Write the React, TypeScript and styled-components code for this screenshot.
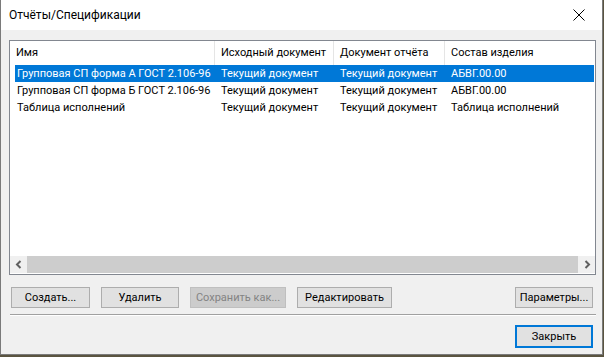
import styled, { createGlobalStyle } from 'styled-components';

const font = '"Roboto", "Noto Sans", "Liberation Sans", sans-serif'

const GlobalStyle = createGlobalStyle`
  html, body {
    margin: 0;
    padding: 0;
    background: #5a5440;
  }
  body {
    font-family: ${font};
    font-size: 11px;
    color: #000;
  }
`

const Window = styled.div`
  width: 603px;
  height: 355px;
  box-sizing: border-box;
  border: 1px solid #7a7a7a;
  border-top: none;
  background: #f0f0f0;
  display: flex;
  flex-direction: column;
`

const TitleBar = styled.div`
  height: 30px;
  flex: none;
  background: #fff;
  display: flex;
  align-items: center;
  justify-content: space-between;
  padding-left: 8px;
`

const Title = styled.span`
  font-size: 12px;
  line-height: 30px;
`

const CloseBox = styled.div`
  width: 46px;
  height: 30px;
  display: flex;
  align-items: center;
  justify-content: center;
`

const Body = styled.div`
  flex: 1;
  display: flex;
  flex-direction: column;
  padding: 10px 6px 0 8px;
`

const ListBox = styled.div`
  height: 235px;
  box-sizing: border-box;
  border: 1px solid #828790;
  background: #fff;
  display: flex;
  flex-direction: column;
`

const Header = styled.div`
  height: 24px;
  flex: none;
  display: grid;
  grid-template-columns: 205px 119px 111px 1fr;
`

const HeaderCell = styled.div<{ $last?: boolean }>`
  border-right: ${p => (p.$last ? 'none' : '1px solid #e5e5e5')};
  padding-left: 6px;
  line-height: 24px;
  white-space: nowrap;
  overflow: hidden;
`

const Rows = styled.div`
  flex: 1;
  padding: 0 1px 0 5px;
`

const Row = styled.div<{ $selected?: boolean }>`
  height: 17px;
  display: grid;
  grid-template-columns: 200px 119px 111px 1fr;
  background: ${p => (p.$selected ? '#0078d7' : 'transparent')};
  color: ${p => (p.$selected ? '#fff' : '#000')};
`

const Cell = styled.div<{ $first?: boolean }>`
  padding-left: ${p => (p.$first ? '2px' : '6px')};
  line-height: 17px;
  white-space: nowrap;
  overflow: hidden;
`

const ScrollBar = styled.div`
  height: 17px;
  flex: none;
  display: flex;
  background: #f0f0f0;
  margin-bottom: 1px;
`

const ScrollArrow = styled.div`
  width: 17px;
  height: 17px;
  display: flex;
  align-items: center;
  justify-content: center;
`

const ScrollThumb = styled.div`
  flex: 1;
  background: #cdcdcd;
`

const ButtonRow = styled.div`
  display: flex;
  gap: 11px;
  margin-top: 12px;
  padding: 0 3px 0 2px;
`

const Button = styled.button<{ $width: number; $default?: boolean; $push?: boolean }>`
  width: ${p => p.$width}px;
  height: ${p => (p.$default ? 23 : 21)}px;
  box-sizing: border-box;
  margin: 0;
  margin-left: ${p => (p.$push ? 'auto' : '0')};
  padding: 0;
  font-family: ${font};
  font-size: 11px;
  color: #000;
  background: #e1e1e1;
  border: ${p => (p.$default ? '2px solid #0078d7' : '1px solid #adadad')};
  &:disabled {
    background: #cccccc;
    border-color: #bfbfbf;
    color: #838383;
  }
`

const Separator = styled.div`
  margin: 6px 0 0 1px;
  height: 0;
  border-top: 1px solid #a0a0a0;
  border-bottom: 1px solid #fff;
`

const Footer = styled.div`
  display: flex;
  justify-content: flex-end;
  margin-top: 9px;
  padding-right: 3px;
`

const Chevron = ({ left }: { left?: boolean }) => (
  <svg width="8" height="9" viewBox="0 0 8 9">
    <path
      d={left ? 'M5.5 1 L2 4.5 L5.5 8' : 'M2.5 1 L6 4.5 L2.5 8'}
      fill="none"
      stroke="#606060"
      strokeWidth="2"
    />
  </svg>
)

const rows = [
  ['Групповая СП форма А ГОСТ 2.106-96', 'Текущий документ', 'Текущий документ', 'АБВГ.00.00'],
  ['Групповая СП форма Б ГОСТ 2.106-96', 'Текущий документ', 'Текущий документ', 'АБВГ.00.00'],
  ['Таблица исполнений', 'Текущий документ', 'Текущий документ', 'Таблица исполнений'],
]

const columns = ['Имя', 'Исходный документ', 'Документ отчёта', 'Состав изделия']

export default function App() {
  return (
    <>
      <GlobalStyle />
      <Window>
        <TitleBar>
          <Title>Отчёты/Спецификации</Title>
          <CloseBox>
            <svg width="12" height="12" viewBox="0 0 12 12">
              <path d="M0.5 0.5 L11.5 11.5 M11.5 0.5 L0.5 11.5" stroke="#000" strokeWidth="1" />
            </svg>
          </CloseBox>
        </TitleBar>
        <Body>
          <ListBox>
            <Header>
              {columns.map((c, i) => (
                <HeaderCell key={c} $last={i === columns.length - 1}>{c}</HeaderCell>
              ))}
            </Header>
            <Rows>
              {rows.map((r, i) => (
                <Row key={i} $selected={i === 0}>
                  {r.map((v, j) => (
                    <Cell key={j} $first={j === 0}>{v}</Cell>
                  ))}
                </Row>
              ))}
            </Rows>
            <ScrollBar>
              <ScrollArrow><Chevron left /></ScrollArrow>
              <ScrollThumb />
              <ScrollArrow><Chevron /></ScrollArrow>
            </ScrollBar>
          </ListBox>
          <ButtonRow>
            <Button $width={79}>Создать...</Button>
            <Button $width={78}>Удалить</Button>
            <Button $width={96} disabled>Сохранить как...</Button>
            <Button $width={95}>Редактировать</Button>
            <Button $width={78} $push>Параметры...</Button>
          </ButtonRow>
          <Separator />
          <Footer>
            <Button $width={78} $default>Закрыть</Button>
          </Footer>
        </Body>
      </Window>
    </>
  )
}
